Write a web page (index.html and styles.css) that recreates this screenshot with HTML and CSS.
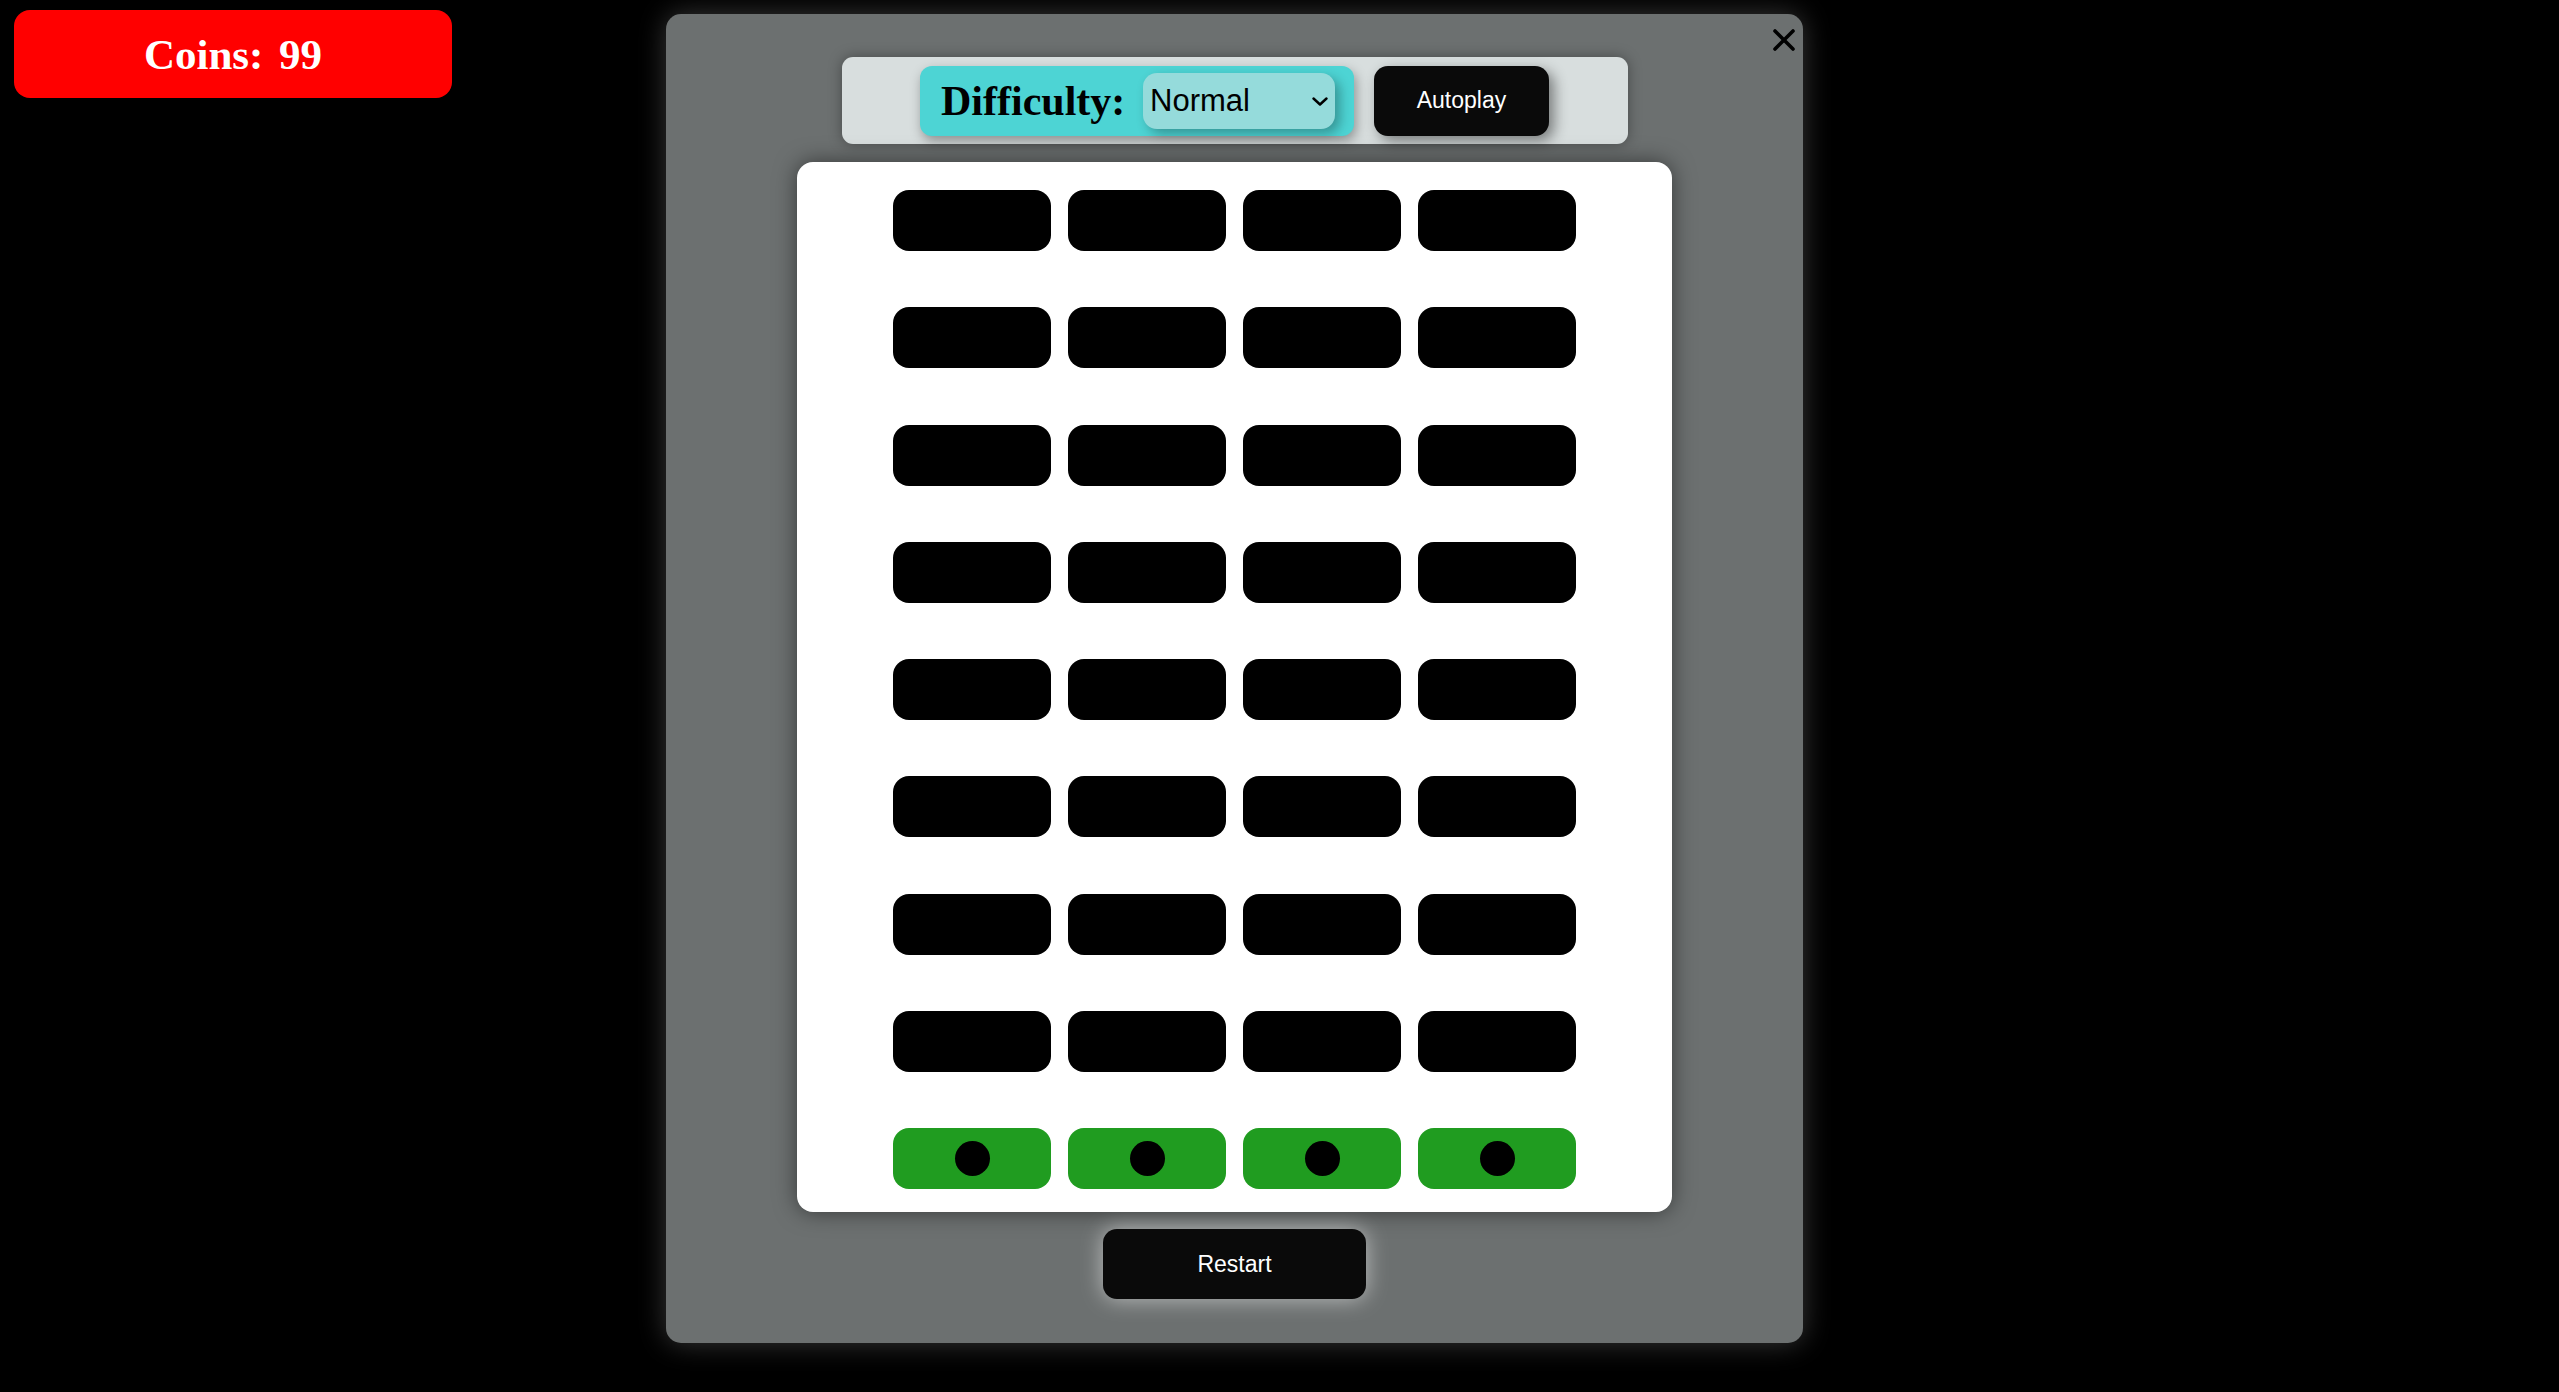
FILE: index.html
```html
<!DOCTYPE html>
<html lang="en">
<head>
<meta charset="utf-8">
<title>Plinko Tower</title>
<link rel="stylesheet" href="styles.css">
</head>
<body>
<div class="coins">Coins: 99</div>

<div class="modal">
  <button class="close" aria-label="Close">
    <svg viewBox="0 0 22 22" width="22" height="22"><path d="M2 2 L20 20 M20 2 L2 20" stroke="#000" stroke-width="3.6" stroke-linecap="round" fill="none"/></svg>
  </button>

  <div class="topbar">
    <div class="difficulty">
      <span class="diff-label">Difficulty:</span>
      <div class="select-wrap">
        <select class="select">
          <option>Easy</option>
          <option selected>Normal</option>
          <option>Hard</option>
        </select>
        <svg class="chev" viewBox="0 0 16 9" width="16" height="9"><path d="M1.5 1.5 L8 7.5 L14.5 1.5" stroke="#000" stroke-width="2.4" fill="none" stroke-linecap="round" stroke-linejoin="round"/></svg>
      </div>
    </div>
    <button class="btn autoplay">Autoplay</button>
  </div>

  <div class="board">
    <div class="tile"></div><div class="tile"></div><div class="tile"></div><div class="tile"></div>
    <div class="tile"></div><div class="tile"></div><div class="tile"></div><div class="tile"></div>
    <div class="tile"></div><div class="tile"></div><div class="tile"></div><div class="tile"></div>
    <div class="tile"></div><div class="tile"></div><div class="tile"></div><div class="tile"></div>
    <div class="tile"></div><div class="tile"></div><div class="tile"></div><div class="tile"></div>
    <div class="tile"></div><div class="tile"></div><div class="tile"></div><div class="tile"></div>
    <div class="tile"></div><div class="tile"></div><div class="tile"></div><div class="tile"></div>
    <div class="tile"></div><div class="tile"></div><div class="tile"></div><div class="tile"></div>
    <div class="tile start"><span class="ball"></span></div>
    <div class="tile start"><span class="ball"></span></div>
    <div class="tile start"><span class="ball"></span></div>
    <div class="tile start"><span class="ball"></span></div>
  </div>

  <button class="btn restart">Restart</button>
</div>
</body>
</html>
```

FILE: styles.css
```css
* {
  box-sizing: border-box;
}

html, body {
  margin: 0;
  padding: 0;
  background: #000;
  height: 100%;
}

body {
  position: relative;
  font-family: "Liberation Sans", Arial, sans-serif;
  padding: 10px 0 0 14px;
}

.coins {
  width: 438px;
  height: 88px;
  background: #ff0000;
  border-radius: 16px;
  color: #fff;
  font-family: "Liberation Serif", "Times New Roman", serif;
  font-weight: bold;
  font-size: 43px;
  word-spacing: 5px;
  display: flex;
  align-items: center;
  justify-content: center;
}

.modal {
  position: absolute;
  left: 666px;
  top: 14px;
  width: 1137px;
  height: 1329px;
  background: #6c7070;
  border-radius: 15px;
  box-shadow: 0 0 28px rgba(255, 255, 255, 0.22);
  display: flex;
  flex-direction: column;
  align-items: center;
  padding-top: 43px;
}

.close {
  position: absolute;
  top: 15px;
  right: 8px;
  width: 22px;
  height: 22px;
  padding: 0;
  border: 0;
  background: transparent;
  display: flex;
}

.topbar {
  width: 786px;
  height: 87px;
  background: #d8dede;
  border-radius: 11px;
  box-shadow: 0 0 14px rgba(0, 0, 0, 0.35);
  display: flex;
  align-items: center;
  justify-content: center;
  gap: 20px;
}

.difficulty {
  width: 434px;
  height: 70px;
  background: #4dd4d4;
  border-radius: 12px;
  box-shadow: 2px 5px 12px rgba(0, 0, 0, 0.35);
  display: flex;
  align-items: center;
  justify-content: space-between;
  padding: 0 19px 0 21px;
}

.diff-label {
  font-family: "Liberation Serif", "Times New Roman", serif;
  font-weight: bold;
  font-size: 42px;
  color: #000;
  font-variant-ligatures: none;
}

.select-wrap {
  position: relative;
  width: 192px;
  height: 56px;
}

.select {
  appearance: none;
  -webkit-appearance: none;
  width: 100%;
  height: 100%;
  border: 0;
  border-radius: 14px;
  background: #95dbdb;
  box-shadow: 5px 5px 12px rgba(0, 0, 0, 0.3);
  font-family: "Liberation Sans", Arial, sans-serif;
  font-size: 31px;
  color: #000;
  padding: 0 0 0 7px;
  outline: none;
}

.chev {
  position: absolute;
  right: 7px;
  top: 24px;
  pointer-events: none;
}

.btn {
  border: 0;
  background: #0a0a0a;
  color: #fff;
  font-family: "Liberation Sans", Arial, sans-serif;
  font-size: 23px;
  border-radius: 14px;
  height: 70px;
  padding: 0;
}

.autoplay {
  width: 175px;
  box-shadow: 5px 5px 14px rgba(0, 0, 0, 0.45);
}

.board {
  margin-top: 18px;
  width: 875px;
  height: 1050px;
  background: #fff;
  border-radius: 16px;
  box-shadow: 0 0 22px rgba(0, 0, 0, 0.5);
  padding: 28px 0 23px;
  display: grid;
  grid-template-columns: repeat(4, 158px);
  grid-auto-rows: 61px;
  column-gap: 17px;
  row-gap: 56.25px;
  justify-content: center;
  align-content: start;
}

.tile {
  background: #000;
  border-radius: 16px;
}

.tile.start {
  background: #209c20;
  display: flex;
  align-items: center;
  justify-content: center;
}

.ball {
  width: 35px;
  height: 35px;
  border-radius: 50%;
  background: #000;
}

.restart {
  margin-top: 17px;
  width: 263px;
  box-shadow: 0 0 22px rgba(255, 255, 255, 0.55);
}
```
